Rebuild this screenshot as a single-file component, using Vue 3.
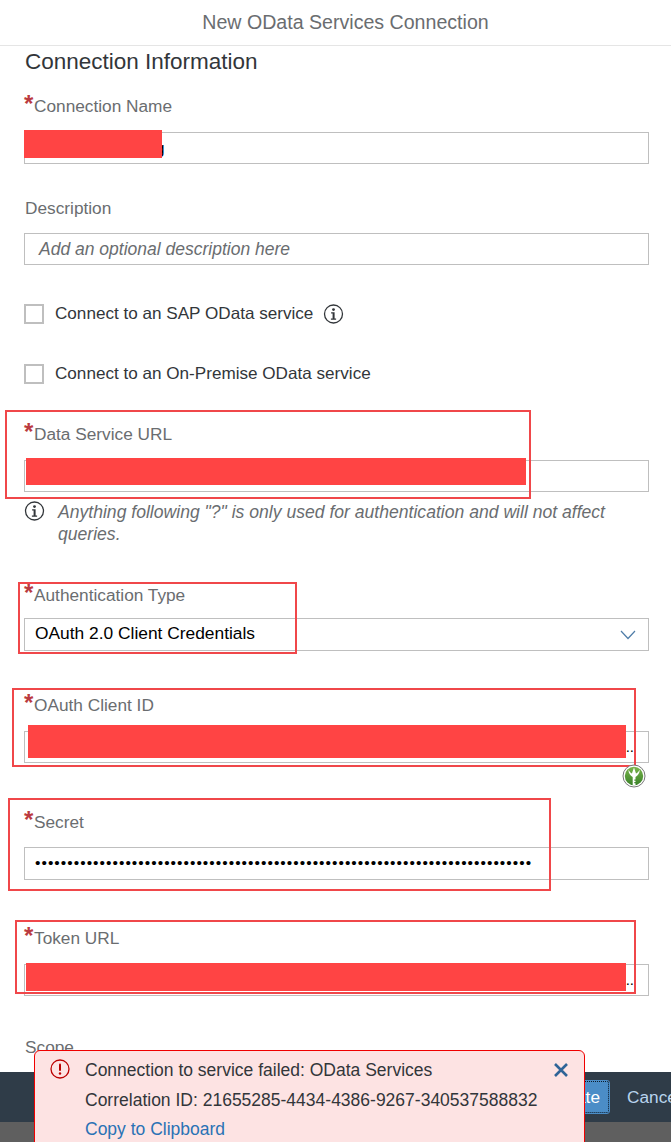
<template>
  <div class="page">
    <header class="dialog-header">New OData Services Connection</header>

    <main class="form">
      <h2 class="section-title">Connection Information</h2>

      <div class="field f-name">
        <label class="req">Connection Name</label>
        <div class="input name-tail">g</div>
      </div>

      <div class="field f-desc">
        <label>Description</label>
        <div class="input placeholder">Add an optional description here</div>
      </div>

      <div class="check f-sap">
        <span class="box"></span>
        <span>Connect to an SAP OData service</span>
        <svg class="info info-inline" viewBox="0 0 20 20"><use href="#info-glyph" /></svg>
      </div>
      <div class="check f-prem">
        <span class="box"></span>
        <span>Connect to an On-Premise OData service</span>
      </div>

      <div class="field f-url">
        <label class="req">Data Service URL</label>
        <div class="input"></div>
      </div>
      <div class="hint">
        <svg class="info" viewBox="0 0 20 20">
          <g id="info-glyph">
            <circle cx="10" cy="10" r="9" fill="none" stroke="#32363a" stroke-width="1.3" />
            <circle cx="10" cy="5.600" r="1.400" fill="#32363a" />
            <path d="M7.600 8.300h3.500v6.300h1.500v1.100H7.400v-1.100h1.700V9.400H7.600z" fill="#32363a" />
          </g>
        </svg>
        <p>Anything following "?" is only used for authentication and will not affect queries.</p>
      </div>

      <div class="field f-auth">
        <label class="req">Authentication Type</label>
        <div class="input select">
          <span>OAuth 2.0 Client Credentials</span>
          <svg class="chevron" viewBox="0 0 16 10"><path d="M1 1l7 7.500L15 1" fill="none" stroke="#4f7da8" stroke-width="1.200" /></svg>
        </div>
      </div>

      <div class="field f-client">
        <label class="req">OAuth Client ID</label>
        <div class="input dots-end">..</div>
      </div>

      <div class="field f-secret">
        <label class="req">Secret</label>
        <div class="input secret">{{ secretDots }}</div>
      </div>

      <div class="field f-token">
        <label class="req">Token URL</label>
        <div class="input dots-end">..</div>
      </div>

      <div class="field f-scope">
        <label>Scope</label>
      </div>
    </main>

    <footer class="dialog-footer">
      <button class="btn-create">Create</button>
      <button class="btn-cancel">Cancel</button>
    </footer>
    <div class="footer-shade"></div>

    <!-- redaction bars and highlight boxes painted on top of the form -->
    <div v-for="(r, i) in redactions" :key="'r' + i" class="redact" :style="boxStyle(r)"></div>
    <div v-for="(h, i) in highlights" :key="'h' + i" class="highlight" :style="boxStyle(h)"></div>

    <svg class="badge" viewBox="0 0 24 24">
      <defs>
        <linearGradient id="leaf" x1="0" y1="0" x2="0" y2="1">
          <stop offset="0" stop-color="#7ab54c" />
          <stop offset="1" stop-color="#3a8229" />
        </linearGradient>
      </defs>
      <circle cx="12" cy="12" r="11" fill="#fff" stroke="#777" stroke-width="1" />
      <circle cx="12" cy="12" r="9.200" fill="url(#leaf)" />
      <path d="M6.500 5.500c-.2 3.500 1.800 6 4.200 7.400V21h2.800v-1.800h-1.200v-1.100h1.200v-1.400h-1.200v-1.100h1.200v-2.700c2.400-1.400 4.400-3.900 4.200-7.400-1 2-2.200 3.400-3.700 4.100L12 3.500 9.900 9.600C8.500 8.900 7.500 7.500 6.500 5.500z" fill="#fff" />
    </svg>

    <div class="toast">
      <svg class="toast-icon" viewBox="0 0 20 20">
        <circle cx="10" cy="10" r="9" fill="none" stroke="#bb0000" stroke-width="1.300" />
        <rect x="9" y="4.500" width="2" height="7.500" rx="1" fill="#bb0000" />
        <circle cx="10" cy="14.500" r="1.200" fill="#bb0000" />
      </svg>
      <div class="toast-body">
        <div>Connection to service failed: OData Services</div>
        <div>Correlation ID: 21655285-4434-4386-9267-340537588832</div>
        <a>Copy to Clipboard</a>
      </div>
      <svg class="toast-close" viewBox="0 0 16 16"><path d="M2 2l12 12M14 2L2 14" stroke="#2f6497" stroke-width="2.600" /></svg>
    </div>
  </div>
</template>

<script setup>
const secretDots = '•'.repeat(77)

const redactions = [
  { x: 24, y: 130, w: 138, h: 28 },
  { x: 26, y: 458, w: 500, h: 27 },
  { x: 28, y: 725, w: 598, h: 33 },
  { x: 26, y: 963, w: 600, h: 28 },
]

const highlights = [
  { x: 5, y: 410, w: 526, h: 89 },
  { x: 18, y: 582, w: 279, h: 72 },
  { x: 12, y: 688, w: 624, h: 79 },
  { x: 8, y: 798, w: 543, h: 93 },
  { x: 15, y: 920, w: 621, h: 74 },
]

const boxStyle = (b) => ({
  left: b.x + 'px',
  top: b.y + 'px',
  width: b.w + 'px',
  height: b.h + 'px',
})
</script>

<style>
body {
  background: #fff;
}
</style>

<style scoped>
.page {
  position: relative;
  width: 671px;
  height: 1142px;
  overflow: hidden;
  display: flex;
  flex-direction: column;
  background: #fff;
  font-family: "Liberation Sans", Arial, sans-serif;
  font-size: 17.250px;
  color: #32363a;
}

.dialog-header {
  flex: none;
  height: 46px;
  line-height: 44px;
  box-sizing: border-box;
  border-bottom: 1px solid #e5e5e5;
  padding-left: 20px;
  text-align: center;
  font-size: 19.600px;
  color: #6a6d70;
}

.form {
  flex: 1;
  min-height: 0;
  overflow: hidden;
  padding: 0 22px 0 24px;
}

.section-title {
  margin: 3px 0 0 1px;
  font-size: 22.500px;
  font-weight: 400;
  line-height: 26px;
  color: #32363a;
}

.field {
  display: flex;
  flex-direction: column;
}

.field label {
  display: block;
  height: 20px;
  line-height: 20px;
  margin-left: 1px;
  color: #6a6d70;
}

.field label.req {
  padding-left: 10px;
  margin-left: 0;
  position: relative;
}

.field label.req::before {
  content: "*";
  position: absolute;
  left: 0;
  top: -4px;
  font-size: 24px;
  line-height: 24px;
  font-weight: 700;
  color: #bb3a40;
}

.input {
  box-sizing: border-box;
  height: 32px;
  line-height: 30px;
  margin-top: 16px;
  padding: 0 6px 0 14px;
  background: #fff;
  border: 1px solid #bfbfbf;
  color: #000;
  white-space: nowrap;
  overflow: hidden;
}

.name-tail {
  padding-left: 130px;
}

.placeholder {
  font-size: 17.500px;
  font-style: italic;
  color: #6a6d70;
}

.f-desc .input {
  margin-top: 15px;
}

.select {
  display: flex;
  align-items: center;
  justify-content: space-between;
  height: 33px;
  padding: 0 12px 3px 10px;
  font-size: 17.370px;
}

.f-auth .input {
  margin-top: 13px;
}

.chevron {
  width: 16px;
  height: 10px;
  margin-top: 3px;
}

.dots-end {
  text-align: right;
  font-size: 15px;
  padding-right: 14px;
}

.secret {
  height: 33px;
  padding-left: 10px;
  font-size: 15.500px;
  letter-spacing: 1.030px;
}

.f-secret .input {
  margin-top: 15px;
}

.check {
  display: flex;
  align-items: center;
  height: 20px;
  font-size: 17.130px;
  color: #32363a;
}

.box {
  box-sizing: border-box;
  width: 20px;
  height: 20px;
  margin-right: 11px;
  border: 2px solid #bfbfbf;
  background: #fff;
}

.info {
  flex: none;
  width: 21px;
  height: 20px;
}

.info-inline {
  margin-left: 10px;
}

.hint {
  display: flex;
  margin-top: 9px;
  font-size: 17.580px;
  font-style: italic;
  color: #6a6d70;
}

.hint p {
  margin: 0 30px 0 13px;
  line-height: 22px;
}

.f-name { margin-top: 21px; }
.f-desc { margin-top: 34px; }
.f-sap { margin-top: 39px; }
.f-prem { margin-top: 40px; }
.f-url { margin-top: 40px; }
.f-auth { margin-top: 40px; }
.f-client { margin-top: 44px; }
.f-secret { margin-top: 49px; }
.f-token { margin-top: 48px; }
.f-scope { margin-top: 41px; }

.dialog-footer {
  flex: none;
  box-sizing: border-box;
  height: 50px;
  display: flex;
  align-items: center;
  gap: 18px;
  padding-left: 545px;
  background: #2f3c48;
  white-space: nowrap;
}

.footer-shade {
  flex: none;
  height: 20px;
  background: #5f5f5f;
}

.btn-create {
  flex: none;
  box-sizing: border-box;
  width: 64px;
  height: 32px;
  padding: 0 8px 0 0;
  text-align: right;
  background: #4b8dc7;
  border: 1px dotted #0b1a28;
  outline: 1px solid #4b8dc7;
  border-radius: 2px;
  font: inherit;
  color: #fff;
}

.btn-cancel {
  flex: none;
  padding: 0;
  background: none;
  border: none;
  font: inherit;
  color: #b8d4ee;
}

.redact {
  position: absolute;
  background: #ff4444;
}

.highlight {
  position: absolute;
  box-sizing: border-box;
  border: 2px solid #f0474a;
}

.badge {
  position: absolute;
  left: 622px;
  top: 764px;
  width: 24px;
  height: 24px;
}

.toast {
  position: absolute;
  left: 34px;
  top: 1050px;
  width: 551px;
  height: 110px;
  box-sizing: border-box;
  display: flex;
  align-items: flex-start;
  border: 1px solid #f00000;
  border-radius: 6px;
  background: #fde3e3;
  color: #32363a;
  font-size: 17.500px;
}

.toast-icon {
  flex: none;
  width: 20px;
  height: 20px;
  margin: 8px 0 0 15px;
}

.toast-body {
  flex: 1;
  margin: 5px 0 0 15px;
  line-height: 29.500px;
}

.toast-body a {
  color: #2a72b5;
}

.toast-close {
  flex: none;
  width: 16px;
  height: 16px;
  margin: 11px 15px 0 0;
}
</style>
